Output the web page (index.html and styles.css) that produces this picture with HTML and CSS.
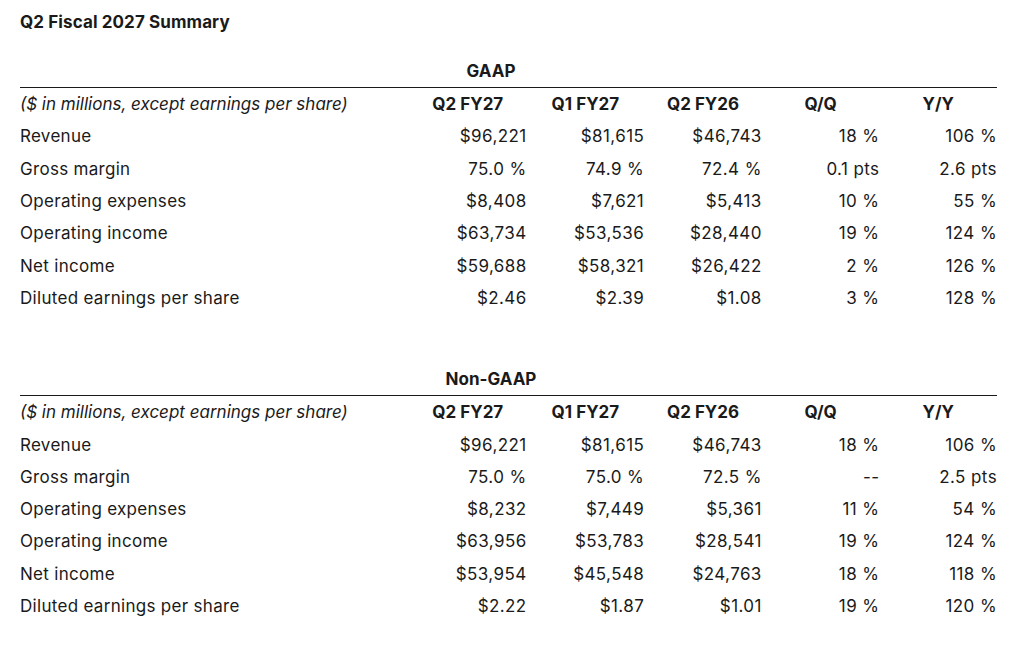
FILE: index.html
```html
<!DOCTYPE html>
<html lang="en">
<head>
<meta charset="utf-8">
<title>Q2 Fiscal 2027 Summary</title>
<link rel="stylesheet" href="styles.css">
</head>
<body>
<main class="page">
  <h1 class="title">Q2 Fiscal 2027 Summary</h1>

  <section class="block">
    <h2 class="block-head">GAAP</h2>
    <table class="fin">
      <colgroup>
        <col class="c-label"><col class="c-num"><col class="c-num"><col class="c-num"><col class="c-num"><col class="c-num">
      </colgroup>
      <thead>
        <tr>
          <th class="note">($ in millions, except earnings per share)</th>
          <th>Q2 FY27</th><th>Q1 FY27</th><th>Q2 FY26</th><th>Q/Q</th><th>Y/Y</th>
        </tr>
      </thead>
      <tbody>
        <tr><td>Revenue</td><td>$96,221</td><td>$81,615</td><td>$46,743</td><td>18 %</td><td>106 %</td></tr>
        <tr><td>Gross margin</td><td>75.0 %</td><td>74.9 %</td><td>72.4 %</td><td>0.1 pts</td><td>2.6 pts</td></tr>
        <tr><td>Operating expenses</td><td>$8,408</td><td>$7,621</td><td>$5,413</td><td>10 %</td><td>55 %</td></tr>
        <tr><td>Operating income</td><td>$63,734</td><td>$53,536</td><td>$28,440</td><td>19 %</td><td>124 %</td></tr>
        <tr><td>Net income</td><td>$59,688</td><td>$58,321</td><td>$26,422</td><td>2 %</td><td>126 %</td></tr>
        <tr><td>Diluted earnings per share</td><td>$2.46</td><td>$2.39</td><td>$1.08</td><td>3 %</td><td>128 %</td></tr>
      </tbody>
    </table>
  </section>

  <section class="block block-second">
    <h2 class="block-head">Non-GAAP</h2>
    <table class="fin">
      <colgroup>
        <col class="c-label"><col class="c-num"><col class="c-num"><col class="c-num"><col class="c-num"><col class="c-num">
      </colgroup>
      <thead>
        <tr>
          <th class="note">($ in millions, except earnings per share)</th>
          <th>Q2 FY27</th><th>Q1 FY27</th><th>Q2 FY26</th><th>Q/Q</th><th>Y/Y</th>
        </tr>
      </thead>
      <tbody>
        <tr><td>Revenue</td><td>$96,221</td><td>$81,615</td><td>$46,743</td><td>18 %</td><td>106 %</td></tr>
        <tr><td>Gross margin</td><td>75.0 %</td><td>75.0 %</td><td>72.5 %</td><td>--</td><td>2.5 pts</td></tr>
        <tr><td>Operating expenses</td><td>$8,232</td><td>$7,449</td><td>$5,361</td><td>11 %</td><td>54 %</td></tr>
        <tr><td>Operating income</td><td>$63,956</td><td>$53,783</td><td>$28,541</td><td>19 %</td><td>124 %</td></tr>
        <tr><td>Net income</td><td>$53,954</td><td>$45,548</td><td>$24,763</td><td>18 %</td><td>118 %</td></tr>
        <tr><td>Diluted earnings per share</td><td>$2.22</td><td>$1.87</td><td>$1.01</td><td>19 %</td><td>120 %</td></tr>
      </tbody>
    </table>
  </section>
</main>
</body>
</html>
```

FILE: styles.css
```css
html, body {
  margin: 0;
  padding: 0;
  background: #ffffff;
}

body {
  font-family: Inter, Roboto, "Liberation Sans", sans-serif;
  color: #1a1a1a;
}

.page {
  width: 977px;
  padding: 0 0 0 20px;
}

.title {
  margin: 12px 0 0 0;
  font-size: 17px;
  line-height: 20px;
  font-weight: 700;
  letter-spacing: 0.1px;
}

.block {
  margin-top: 29px;
}

.block-second {
  margin-top: 55px;
}

.block-head {
  margin: 0;
  padding: 0 35px 6px 0;
  font-size: 17px;
  line-height: 20px;
  font-weight: 700;
  text-align: center;
  border-bottom: 1px solid #1a1a1a;
}

.fin {
  width: 977px;
  table-layout: fixed;
  border-collapse: collapse;
  font-size: 17px;
}

.c-label { width: 389px; }
.c-num { width: 117.6px; }

.fin th,
.fin td {
  padding: 0;
  height: 32.3px;
  line-height: 20px;
  vertical-align: middle;
  white-space: nowrap;
}

.fin th {
  font-weight: 700;
  text-align: center;
}

.fin th.note {
  font-weight: 400;
  font-style: italic;
  text-align: left;
}

.fin td {
  text-align: right;
  letter-spacing: 0.4px;
}

.fin td:first-child {
  text-align: left;
  letter-spacing: 0.3px;
}
```
